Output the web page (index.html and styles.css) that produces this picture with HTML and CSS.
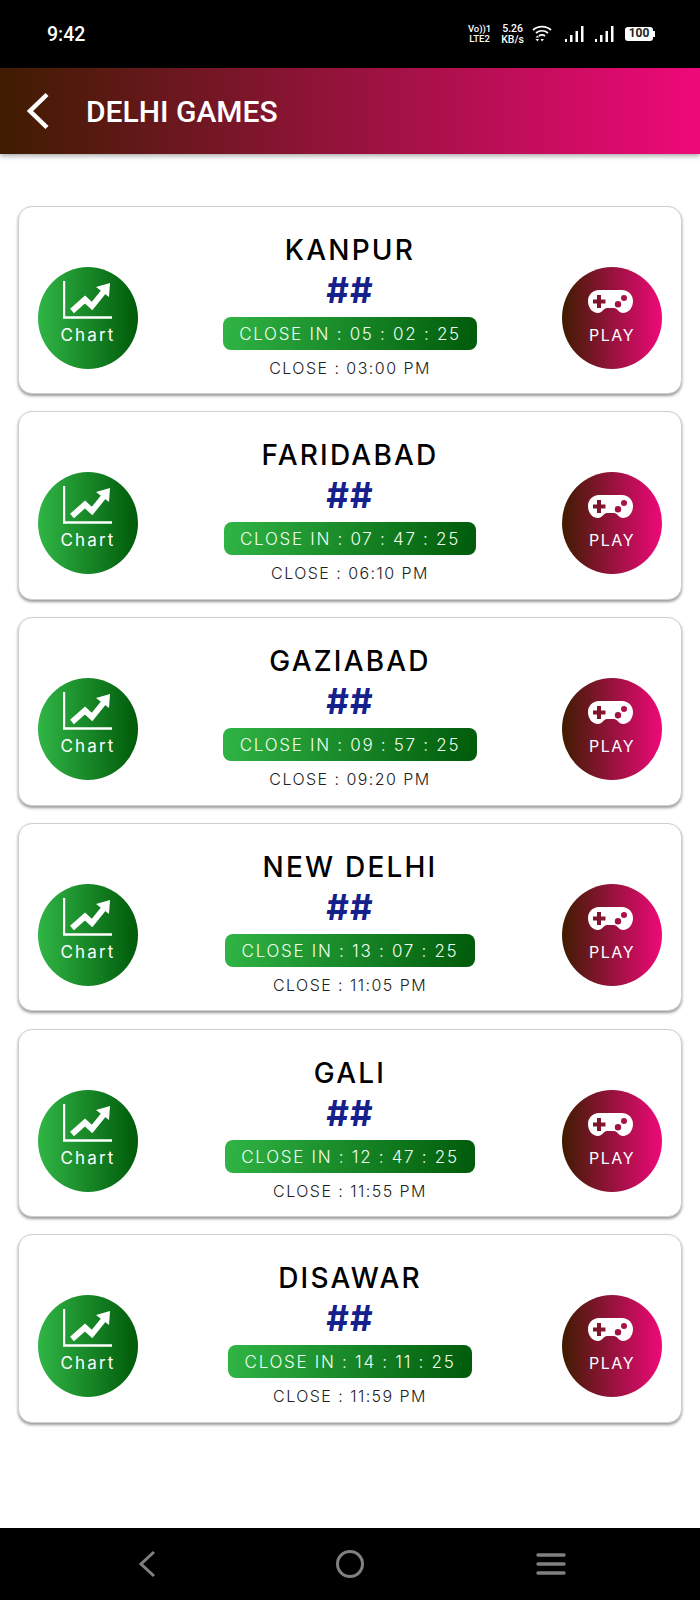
FILE: index.html
```html
<!DOCTYPE html>
<html lang="en">
<head>
    <meta charset="UTF-8">
    <meta name="viewport" content="width=device-width, initial-scale=1.0">
    <title>Delhi Games</title>
    <link rel="stylesheet" href="styles.css">
</head>
<body>
    <svg class="defs">
        <symbol id="ic-chart" viewBox="0 0 50 38">
            <path d="M1 0V36.5H49" fill="none" stroke="#fff" stroke-width="2.4"/>
            <path d="M9 30L22 18.5L29 25L42 9" fill="none" stroke="#fff" stroke-width="5.8"/>
            <path d="M33 6L47 2L46 16Z" fill="#fff"/>
        </symbol>
        <symbol id="ic-pad" viewBox="0 0 45 24">
            <path fill="#fff" fill-rule="evenodd" d="M11 0H34C40.5 0 45 5 45 11C45 18 40.500 23 35 23C31 23 29 18 26 18H19C16 18 14 23 10 23C4.500 23 0 18 0 11C0 5 4.500 0 11 0ZM9 5V9.500H5V13.500H9V18H13V13.500H17.500V9.500H13V5ZM36 5A3 3 0 1 0 36 11A3 3 0 1 0 36 5ZM30 11A3.200 3.200 0 1 0 30 17.400A3.200 3.200 0 1 0 30 11Z"/>
        </symbol>
    </svg>

    <div class="status-bar">
        <span class="clock">9:42</span>
        <div class="status-icons">
            <span class="tiny-stack"><span>Vo))1</span><span>LTE2</span></span>
            <span class="tiny-stack speed"><span>5.26</span><span>KB/s</span></span>
            <svg class="wifi" width="20" height="18" viewBox="0 0 20 18">
                <path d="M1 5C6 0.500 14 0.500 19 5M4 8C7.500 5 12.500 5 16 8M7 11C8.800 9.600 11.200 9.600 13 11" fill="none" stroke="#fff" stroke-width="1.700"/>
                <path d="M3.500 12.500L5.500 10.500L7 12.500ZM3.500 14H7L5.500 16.500ZM8.500 14H12L10 16.500Z" fill="#fff"/>
            </svg>
            <svg class="bars" width="20" height="18" viewBox="0 0 20 18">
                <path d="M1 14h2v3H1zM6 10h2.500v7H6zM11.500 6h2.500v11h-2.500zM17 1h2.500v16H17z" fill="#fff"/>
            </svg>
            <svg class="bars" width="20" height="18" viewBox="0 0 20 18">
                <path d="M1 14h2v3H1zM6 10h2.500v7H6zM11.500 6h2.500v11h-2.500zM17 1h2.500v16H17z" fill="#fff"/>
            </svg>
            <span class="battery">100</span>
        </div>
    </div>

    <header class="app-bar">
        <svg class="back" width="24" height="38" viewBox="0 0 24 38">
            <path d="M21 2.500L4 19L21 35.500" fill="none" stroke="#fff" stroke-width="4.500"/>
        </svg>
        <h1>DELHI GAMES</h1>
    </header>

    <main class="game-list">
        <div class="game-card">
            <a class="round-btn chart"><svg class="ic-chart"><use href="#ic-chart"/></svg><span>Chart</span></a>
            <div class="game-info">
                <h2>KANPUR</h2>
                <div class="result">##</div>
                <div class="close-in">CLOSE IN : 05 : 02 : 25</div>
                <div class="close-at">CLOSE : 03:00 PM</div>
            </div>
            <a class="round-btn play"><svg class="ic-pad"><use href="#ic-pad"/></svg><span>PLAY</span></a>
        </div>
        <div class="game-card">
            <a class="round-btn chart"><svg class="ic-chart"><use href="#ic-chart"/></svg><span>Chart</span></a>
            <div class="game-info">
                <h2>FARIDABAD</h2>
                <div class="result">##</div>
                <div class="close-in">CLOSE IN : 07 : 47 : 25</div>
                <div class="close-at">CLOSE : 06:10 PM</div>
            </div>
            <a class="round-btn play"><svg class="ic-pad"><use href="#ic-pad"/></svg><span>PLAY</span></a>
        </div>
        <div class="game-card">
            <a class="round-btn chart"><svg class="ic-chart"><use href="#ic-chart"/></svg><span>Chart</span></a>
            <div class="game-info">
                <h2>GAZIABAD</h2>
                <div class="result">##</div>
                <div class="close-in">CLOSE IN : 09 : 57 : 25</div>
                <div class="close-at">CLOSE : 09:20 PM</div>
            </div>
            <a class="round-btn play"><svg class="ic-pad"><use href="#ic-pad"/></svg><span>PLAY</span></a>
        </div>
        <div class="game-card">
            <a class="round-btn chart"><svg class="ic-chart"><use href="#ic-chart"/></svg><span>Chart</span></a>
            <div class="game-info">
                <h2>NEW DELHI</h2>
                <div class="result">##</div>
                <div class="close-in">CLOSE IN : 13 : 07 : 25</div>
                <div class="close-at">CLOSE : 11:05 PM</div>
            </div>
            <a class="round-btn play"><svg class="ic-pad"><use href="#ic-pad"/></svg><span>PLAY</span></a>
        </div>
        <div class="game-card">
            <a class="round-btn chart"><svg class="ic-chart"><use href="#ic-chart"/></svg><span>Chart</span></a>
            <div class="game-info">
                <h2>GALI</h2>
                <div class="result">##</div>
                <div class="close-in">CLOSE IN : 12 : 47 : 25</div>
                <div class="close-at">CLOSE : 11:55 PM</div>
            </div>
            <a class="round-btn play"><svg class="ic-pad"><use href="#ic-pad"/></svg><span>PLAY</span></a>
        </div>
        <div class="game-card">
            <a class="round-btn chart"><svg class="ic-chart"><use href="#ic-chart"/></svg><span>Chart</span></a>
            <div class="game-info">
                <h2>DISAWAR</h2>
                <div class="result">##</div>
                <div class="close-in">CLOSE IN : 14 : 11 : 25</div>
                <div class="close-at">CLOSE : 11:59 PM</div>
            </div>
            <a class="round-btn play"><svg class="ic-pad"><use href="#ic-pad"/></svg><span>PLAY</span></a>
        </div>
    </main>

    <div class="nav-bar">
        <svg class="nav-back" width="18" height="28" viewBox="0 0 18 28">
            <path d="M16 2L3 14L16 26" fill="none" stroke="#808080" stroke-width="3"/>
        </svg>
        <svg width="30" height="30" viewBox="0 0 30 30">
            <circle cx="15" cy="15" r="12.500" fill="none" stroke="#808080" stroke-width="3"/>
        </svg>
        <svg width="30" height="24" viewBox="0 0 30 24">
            <path d="M2 3H28M2 12H28M2 21H28" fill="none" stroke="#808080" stroke-width="3.400" stroke-linecap="round"/>
        </svg>
    </div>
</body>
</html>
```

FILE: styles.css
```css
* {
    box-sizing: border-box;
}

body {
    font-family: Inter, "Liberation Sans", sans-serif;
    background-color: #fff;
    margin: 0;
    padding: 0;
    width: 700px;
    height: 1600px;
    display: flex;
    flex-direction: column;
    overflow: hidden;
}

.defs {
    display: none;
}

.status-bar {
    height: 68px;
    flex: none;
    background-color: #000;
    color: #fff;
    display: flex;
    align-items: center;
    justify-content: space-between;
    padding: 0 47px;
    font-family: Roboto, sans-serif;
}

.clock {
    font-size: 19.5px;
    font-weight: 500;
}

.status-icons {
    display: flex;
    align-items: center;
    gap: 8px;
}

.tiny-stack {
    display: flex;
    flex-direction: column;
    align-items: center;
    font-size: 9.5px;
    font-weight: 500;
    line-height: 10px;
}

.speed {
    font-size: 10.5px;
    line-height: 11px;
    margin-left: 2px;
}

.wifi {
    margin-right: 4px;
}

.bars {
    margin-right: 2px;
}

.battery {
    position: relative;
    background-color: #fff;
    color: #222;
    font-size: 12px;
    font-weight: 700;
    line-height: 13px;
    height: 14px;
    width: 28px;
    text-align: center;
    border-radius: 3px;
    margin-left: 1px;
}

.battery::after {
    content: "";
    position: absolute;
    right: -2px;
    top: 4px;
    width: 2px;
    height: 6px;
    background-color: #fff;
}

.app-bar {
    height: 86px;
    flex: none;
    background: linear-gradient(90deg, #3f1c00, #ee0979);
    box-shadow: 0 2px 5px rgba(0, 0, 0, 0.35);
    display: flex;
    align-items: center;
    padding-left: 26px;
}

.app-bar h1 {
    margin: 0 0 0 36px;
    color: #fff;
    font-family: Roboto, sans-serif;
    font-size: 30px;
    font-weight: 500;
}

.game-list {
    flex: 1;
    padding: 51.8px 18px 0;
    display: flex;
    flex-direction: column;
    gap: 17.3px;
}

.game-card {
    height: 188.4px;
    background-color: #fff;
    border: 1.5px solid #cfcfcf;
    border-radius: 14px;
    box-shadow: 0 2px 3px rgba(0, 0, 0, 0.4);
    display: flex;
    justify-content: space-between;
    padding: 60px 19px 0;
}

.round-btn {
    width: 100px;
    height: 102px;
    flex: none;
    border-radius: 50%;
    color: #fff;
    display: flex;
    flex-direction: column;
    align-items: center;
    font-size: 16px;
    letter-spacing: 1.5px;
}

.round-btn span {
    line-height: 20px;
}

.chart {
    background: linear-gradient(90deg, #30b545, #005a0a);
    padding-top: 14px;
    font-size: 17px;
    letter-spacing: 2.2px;
}

.play {
    background: linear-gradient(90deg, #3f1c00, #ee0979);
    padding-top: 23px;
}

.ic-chart {
    width: 50px;
    height: 38px;
    margin: 0 0 6px 0;
}

.ic-pad {
    width: 45px;
    height: 24px;
    margin: 0 0 11px -3px;
}

.game-info {
    flex: 1;
    margin-top: -37px;
    display: flex;
    flex-direction: column;
    align-items: center;
}

.game-info h2 {
    margin: 0;
    color: #000;
    font-size: 28px;
    font-weight: 500;
    line-height: 40px;
    letter-spacing: 2.2px;
}

.result {
    color: #15208c;
    font-size: 35px;
    font-weight: 700;
    line-height: 40px;
    letter-spacing: 1px;
}

.close-in {
    margin-top: 7px;
    height: 33px;
    padding: 0 16.500px;
    border-radius: 8px;
    background: linear-gradient(100deg, #30b545, #005a0a);
    color: #f0fff0;
    font-size: 17px;
    font-weight: 300;
    line-height: 35px;
    letter-spacing: 1.7px;
}

.close-at {
    margin-top: 8px;
    color: #222;
    font-size: 16px;
    font-weight: 300;
    line-height: 20px;
    letter-spacing: 1.45px;
}

.nav-bar {
    height: 72px;
    flex: none;
    background-color: #000;
    display: flex;
    align-items: center;
    justify-content: space-between;
    padding: 0 134px 0 138px;
}

.nav-back {
    margin-right: 8px;
}
```
